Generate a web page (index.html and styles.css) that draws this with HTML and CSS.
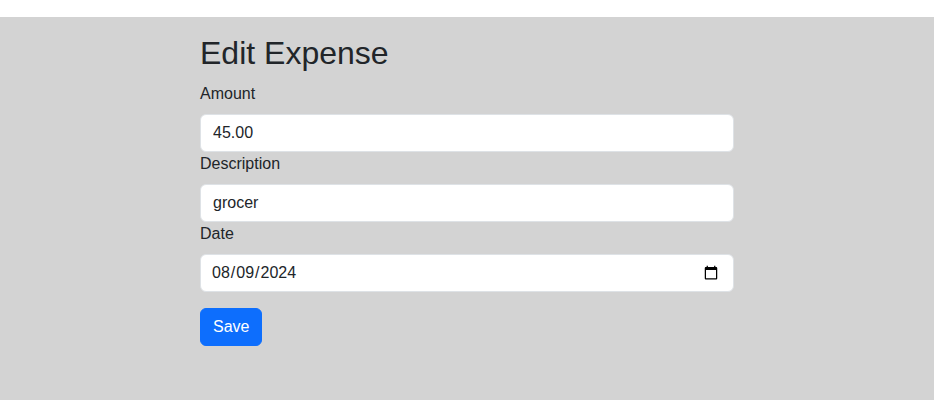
FILE: index.html
```html
<!DOCTYPE html>
<html lang="en">
<head>
<meta charset="utf-8">
<title>Edit Expense</title>
<link rel="stylesheet" href="styles.css">
</head>
<body>
<div class="topbar"></div>
<main class="page">
  <div class="container">
    <h2 class="title">Edit Expense</h2>
    <form class="form">
      <label class="label" for="amount">Amount</label>
      <input class="control" id="amount" type="text" value="45.00">
      <label class="label" for="description">Description</label>
      <input class="control" id="description" type="text" value="grocer">
      <label class="label" for="date">Date</label>
      <input class="control date" id="date" type="date" value="2024-08-09">
      <div class="actions">
        <button class="btn" type="button">Save</button>
      </div>
    </form>
  </div>
</main>
</body>
</html>
```
FILE: styles.css
```css
* { box-sizing: border-box; }
html, body { margin: 0; padding: 0; height: 100%; }
body {
  font-family: "Liberation Sans", Arial, sans-serif;
  font-size: 16px;
  line-height: 1.5;
  color: #212529;
  background: #ffffff;
  display: flex;
  flex-direction: column;
}
.topbar { height: 17px; background: #ffffff; flex: none; }
.page {
  flex: 1;
  background: #d3d3d3;
  padding-top: 17px;
}
.container {
  width: 534px;
  margin: 0 auto;
}
.title {
  margin: 0 0 10px;
  font-size: 32px;
  font-weight: 400;
  line-height: 1.2;
  color: #212529;
}
.form { display: flex; flex-direction: column; }
.label {
  display: block;
  margin-bottom: 8px;
  line-height: 24px;
}
.control {
  display: block;
  width: 100%;
  height: 38px;
  padding: 6px 12px;
  font-family: inherit;
  font-size: 16px;
  line-height: 24px;
  color: #212529;
  background: #ffffff;
  border: 1px solid #dee2e6;
  border-radius: 6px;
  outline: none;
}
.date { padding-left: 10px; }
.actions { margin-top: 16px; }
.btn {
  height: 38px;
  padding: 6px 12px;
  font-family: inherit;
  font-size: 16px;
  line-height: 24px;
  color: #ffffff;
  background: #0d6efd;
  border: 1px solid #0d6efd;
  border-radius: 6px;
  cursor: pointer;
}
```
